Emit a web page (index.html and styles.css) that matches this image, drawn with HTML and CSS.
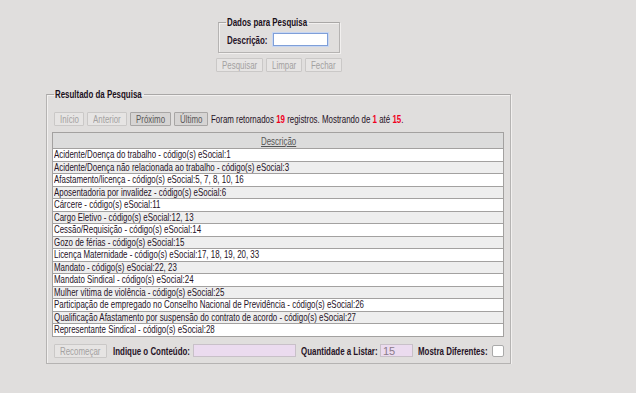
FILE: index.html
```html
<!DOCTYPE html>
<html lang="pt-BR">
<head>
  <meta charset="UTF-8">
  <title>Pesquisa - Motivo de Afastamento</title>
  <link rel="stylesheet" href="styles.css">
</head>
<body>
  <div class="page">
    <fieldset class="search-box">
      <legend><span class="n">Dados para Pesquisa</span></legend>
      <label class="lbl-desc" for="descricao"><span class="n">Descrição:</span></label>
      <input id="descricao" type="text" class="field-focus">
    </fieldset>

    <div class="search-actions">
      <button class="btn w-pesq" disabled><span class="n">Pesquisar</span></button>
      <button class="btn w-limp" disabled><span class="n">Limpar</span></button>
      <button class="btn w-fech" disabled><span class="n">Fechar</span></button>
    </div>

    <fieldset class="result-box">
      <legend><span class="n">Resultado da Pesquisa</span></legend>

      <div class="pager">
        <button class="btn w-ini" disabled><span class="n">Início</span></button>
        <button class="btn w-ant" disabled><span class="n">Anterior</span></button>
        <button class="btn w-prox active"><span class="n">Próximo</span></button>
        <button class="btn w-ult active"><span class="n">Último</span></button>
        <span class="n pager-info">Foram retornados <b>19</b> registros. Mostrando de <b>1</b> até <b>15</b>.</span>
      </div>

      <table class="grid">
        <thead>
          <tr><th><span class="n">Descrição</span></th></tr>
        </thead>
        <tbody>
          <tr><td><span class="n">Acidente/Doença do trabalho - código(s) eSocial:1</span></td></tr>
          <tr><td><span class="n">Acidente/Doença não relacionada ao trabalho - código(s) eSocial:3</span></td></tr>
          <tr><td><span class="n">Afastamento/licença - código(s) eSocial:5, 7, 8, 10, 16</span></td></tr>
          <tr><td><span class="n">Aposentadoria por invalidez - código(s) eSocial:6</span></td></tr>
          <tr><td><span class="n">Cárcere - código(s) eSocial:11</span></td></tr>
          <tr><td><span class="n">Cargo Eletivo - código(s) eSocial:12, 13</span></td></tr>
          <tr><td><span class="n">Cessão/Requisição - código(s) eSocial:14</span></td></tr>
          <tr><td><span class="n">Gozo de férias - código(s) eSocial:15</span></td></tr>
          <tr><td><span class="n">Licença Maternidade - código(s) eSocial:17, 18, 19, 20, 33</span></td></tr>
          <tr><td><span class="n">Mandato - código(s) eSocial:22, 23</span></td></tr>
          <tr><td><span class="n">Mandato Sindical - código(s) eSocial:24</span></td></tr>
          <tr><td><span class="n">Mulher vítima de violência - código(s) eSocial:25</span></td></tr>
          <tr><td><span class="n">Participação de empregado no Conselho Nacional de Previdência - código(s) eSocial:26</span></td></tr>
          <tr><td><span class="n">Qualificação Afastamento por suspensão do contrato de acordo - código(s) eSocial:27</span></td></tr>
          <tr><td><span class="n">Representante Sindical - código(s) eSocial:28</span></td></tr>
        </tbody>
      </table>

      <div class="filter">
        <button class="btn w-rec" disabled><span class="n">Recomeçar</span></button>
        <label class="filter-label lbl-cont" for="conteudo"><span class="n">Indique o Conteúdo:</span></label>
        <input id="conteudo" type="text" class="field-pink wide">
        <label class="filter-label lbl-qtd" for="quantidade"><span class="n">Quantidade a Listar:</span></label>
        <input id="quantidade" type="text" class="field-pink short" value="15">
        <label class="filter-label lbl-dif" for="diferentes"><span class="n">Mostra Diferentes:</span></label>
        <span class="check"></span>
      </div>
    </fieldset>
  </div>
</body>
</html>
```

FILE: styles.css
```css
* {
  box-sizing: border-box;
}
html, body {
  margin: 0;
  background-color: #e0dedd;
}
body {
  font-family: "Liberation Sans", Arial, sans-serif;
  font-size: 11px;
  color: #261226;
}

/* the original screen uses a narrow sans; condense the text horizontally */
.n {
  display: inline-block;
  width: 0;
  white-space: nowrap;
  transform: scaleX(0.72);
  transform-origin: 0 50%;
}

.page {
  width: 557px;
  padding-top: 16px;
  display: flex;
  flex-direction: column;
  align-items: center;
}
fieldset {
  margin: 0;
  border: 1px solid #b5b3b2;
  border-top-color: #a9a7a6;
  box-shadow: inset 1px 1px 0 #f2f0ef, 1px 1px 0 #f2f0ef;
}
legend {
  font-weight: bold;
  padding: 0 1px;
  color: #1a0f1a;
}
.search-box {
  width: 122px;
  height: 37px;
  padding: 5px 7px 0 7px;
  display: flex;
  align-items: center;
}
.search-box legend {
  width: 83px;
}
.lbl-desc {
  font-weight: bold;
  width: 46px;
  margin-left: 1px;
}
input {
  font-family: inherit;
  font-size: 11px;
  margin: 0;
  padding: 0 2px;
  height: 13px;
  outline: none;
}
.field-focus {
  width: 55px;
  border: 1px solid #7f9fd8;
  background: #fff;
  box-shadow: 0 0 0 1px #c7d6f2;
}
.search-actions {
  display: flex;
  gap: 3px;
  margin-top: 5px;
}
.btn {
  font-family: inherit;
  font-size: 11px;
  height: 14px;
  line-height: 12px;
  padding: 0 0 0 5px;
  margin: 0;
  text-align: left;
  border: 1px solid #cac8c7;
  border-radius: 1px;
  background: #e6e4e3;
  color: #a3a1a1;
}
.btn.active {
  border-color: #a8a6a5;
  background: #d6d4d3;
  color: #5a5858;
  cursor: pointer;
}
.w-pesq { width: 47px; }
.w-limp { width: 36px; }
.w-fech { width: 37px; }
.w-ini { width: 30px; }
.w-ant { width: 40px; }
.w-prox { width: 41px; }
.w-ult { width: 34px; }
.w-rec { width: 53px; }

.result-box {
  width: 465px;
  margin-top: 16px;
  padding: 0 6px 5px 5px;
}
.result-box legend {
  width: 90px;
  margin-left: 2px;
}
.pager {
  display: flex;
  align-items: center;
  gap: 3px;
  margin-top: 12px;
  margin-left: 2px;
}
.pager-info b {
  color: #f0001e;
}
.grid {
  width: 452px;
  margin-top: 6px;
  border-collapse: collapse;
  border: 1px solid #a3a1a0;
}
.grid th {
  height: 16px;
  padding: 0 0 0 208px;
  text-align: left;
  font-weight: normal;
  background: #dcdcdc;
  color: #555;
  border-bottom: 1px solid #a3a1a0;
}
.grid th .n {
  text-decoration: underline;
}
.grid td {
  height: 12.5px;
  padding: 0 0 0 1px;
  line-height: 11px;
  background: #fff;
  border-bottom: 1px solid #a3a1a0;
}
.grid tr:nth-child(even) td {
  background: #eeeeee;
}
.filter {
  display: flex;
  align-items: center;
  margin-top: 7px;
  margin-left: 2px;
}
.filter-label {
  font-weight: bold;
}
.lbl-cont {
  width: 80px;
  margin-left: 6px;
}
.lbl-qtd {
  width: 79px;
  margin-left: 5px;
}
.lbl-dif {
  width: 74px;
  margin-left: 5px;
}
.field-pink {
  border: 1px solid #c8c0c8;
  background: #ebdbef;
  color: #8a7a8a;
}
.wide {
  width: 103px;
}
.short {
  width: 33px;
}
.check {
  width: 12px;
  height: 12px;
  border: 1px solid #aaa;
  border-radius: 2px;
  background: #fff;
}
```
